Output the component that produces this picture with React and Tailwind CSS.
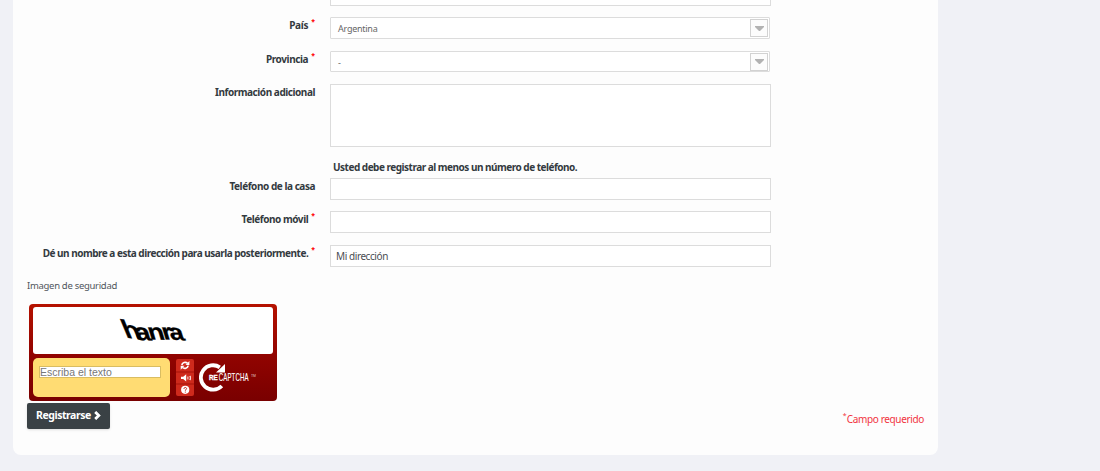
import React, { useState } from 'react';

const inputClass =
    'block w-[441px] border border-[#dcdcdc] bg-white px-[5px] text-[10px] tracking-[-0.42px] text-[#4a4d52] outline-none';

const Row = ({ label, required, className, labelClass, children }) => (
    <div className={`flex items-start ${className}`}>
        <label className="mr-[15px] flex w-[302px] justify-end whitespace-nowrap text-[10px] font-bold leading-[17px] text-[#333a40]">
            <span className={labelClass}>{label}</span>
            {required && <sup className="ml-[3px] top-0 text-[7px] leading-[9px] text-[#ff0000]">*</sup>}
        </label>
        {children}
    </div>
);

const Select = ({ value, className }) => (
    <div className={`flex w-[440px] items-center justify-between rounded-[1px] border border-[#dcdcdc] bg-white pl-[7px] ${className}`}>
        <span className="mt-px text-[9px] leading-none tracking-[-0.25px] text-[#666]">{value}</span>
        <div className="mr-px flex h-[18px] w-[18px] items-center justify-center border border-[#d2d2d2] bg-[#fcfcfc]">
            <svg width="9" height="5" viewBox="0 0 9 5">
                <path d="M0 0h9v1L5 5H4L0 1z" fill="#b2b2b2" />
            </svg>
        </div>
    </div>
);

const Captcha = () => (
    <div className="ml-[16px] mt-[10px] h-[97px] w-[248px] rounded-[4px] bg-gradient-to-b from-[#b51200] via-[#930400] to-[#790000] px-[4px] pt-[3px]">
        <div className="h-[47px] w-[240px] rounded-[3px] bg-white">
            <svg width="240" height="47" fontFamily="'Liberation Sans', sans-serif" fontWeight="bold">
                <g stroke="#000" strokeWidth=".3">
                    <text transform="matrix(1.1 .17 .42 1 93 30.5)" fontSize="26">h</text>
                    <text transform="matrix(1.15 .04 .3 1 104 33)" fontSize="24">a</text>
                    <text transform="matrix(1.15 .02 .3 1 117 32.5)" fontSize="23">n</text>
                    <text transform="matrix(1.15 .02 .3 1 131 32.5)" fontSize="23">r</text>
                    <text transform="matrix(1.15 .08 .3 1 138 32.5)" fontSize="23">a</text>
                </g>
            </svg>
        </div>
        <div className="mt-[4px] flex">
            <div className="h-[39px] w-[137px] rounded-[5px] bg-[#ffdc73] pl-[6px] pt-[8px]">
                <input
                    type="text"
                    placeholder="Escriba el texto"
                    className="block h-[12px] w-[122px] border border-[#d9bd62] bg-white p-0 font-['Liberation_Sans',sans-serif] text-[10.5px] leading-[10px] text-[#444] outline-none placeholder:text-[#777]"
                />
            </div>
            <div className="ml-[6px] mt-px flex h-[37px] w-[18px] flex-col overflow-hidden rounded-[2px] bg-[#ce2a1c]">
                <svg width="18" height="37" viewBox="0 0 18 37" fill="none" stroke="#fff">
                    <path d="M0 13h18M0 25h18" stroke="#a51208" />
                    <path d="M5.8 6C6.2 3.5 9.5 2.5 11.5 4.2M12.2 6.7C11.7 9.3 8.4 10.2 6.5 8.5" strokeWidth="1.6" />
                    <path d="M13.4 2v4H9.6zM4.7 10.7v-4h3.8z" fill="#fff" stroke="none" />
                    <path d="M5 17.7h2.2l3-2.5v7.4l-3-2.5H5z" fill="#fff" stroke="none" />
                    <path d="M11.9 17.5v3M13.4 17.8l1-.6v3.6l-1-.6" strokeWidth=".9" />
                    <circle cx="9.2" cy="30.8" r="4.1" fill="#fff" stroke="none" />
                    <path d="M7.9 29.8c.1-1.8 2.8-1.7 2.6-.1-.1.9-1.2.9-1.2 2M9.3 32.6v1" stroke="#c02217" />
                </svg>
            </div>
            <svg className="ml-[5px]" width="64" height="38" viewBox="0 0 64 38" fill="#fff" fontFamily="'Liberation Sans', sans-serif">
                <path d="M20.8 9.3A12.2 12.2 0 1 0 22.8 28" fill="none" stroke="#fff" strokeWidth="3.8" />
                <path d="M26 6v8.5h-9z" />
                <text transform="translate(10 22) scale(.98 1)" fontSize="6.4" fontWeight="bold" stroke="#fff" strokeWidth=".3">RE</text>
                <text transform="translate(19.7 23) scale(.58 1)" fontSize="10.5" stroke="#fff" strokeWidth=".15" letterSpacing=".2">CAPTCHA</text>
                <text transform="translate(52 19.2)" fontSize="3.4" opacity=".75">TM</text>
            </svg>
        </div>
    </div>
);

const App = () => {
    const [alias, setAlias] = useState('Mi dirección');

    return (
        <div className="h-[471px] overflow-hidden bg-[#f0f1f6] font-['Noto_Sans','Open_Sans',sans-serif]">
            <form className="ml-[13px] h-[455px] w-[925px] overflow-hidden rounded-b-[8px] bg-[#fdfdfd]" onSubmit={e => e.preventDefault()}>
                <div className="ml-[317px] h-[6px] w-[441px] border border-t-0 border-[#dcdcdc] bg-white" />
                <Row label="País" required className="mt-[11px]" labelClass="tracking-[-0.3px]">
                    <Select value="Argentina" className="h-[22px]" />
                </Row>
                <Row label="Provincia" required className="mt-[12px]" labelClass="tracking-[-0.4px]">
                    <Select value="-" className="h-[21px]" />
                </Row>
                <Row label="Información adicional" className="mt-[12px]" labelClass="tracking-[-0.45px]">
                    <textarea className={`${inputClass} h-[63px] resize-none`} />
                </Row>
                <p className="ml-[320px] mt-[12px] text-[10px] font-bold leading-[16px] tracking-[-0.5px] text-[#333a40]">
                    Usted debe registrar al menos un número de teléfono.
                </p>
                <Row label="Teléfono de la casa" className="mt-[3px]" labelClass="tracking-[-0.45px]">
                    <input type="text" className={`${inputClass} h-[22px]`} />
                </Row>
                <Row label="Teléfono móvil" required className="mt-[11px]" labelClass="tracking-[-0.45px]">
                    <input type="text" className={`${inputClass} h-[22px]`} />
                </Row>
                <Row label="Dé un nombre a esta dirección para usarla posteriormente." required className="mt-[12px]" labelClass="tracking-[-0.5px]">
                    <input
                        type="text"
                        value={alias}
                        onChange={e => setAlias(e.target.value)}
                        className={`${inputClass} h-[22px]`}
                    />
                </Row>
                <p className="ml-[14px] mt-[11px] text-[9.5px] leading-[16px] tracking-[-0.3px] text-[#50565c]">Imagen de seguridad</p>
                <Captcha />
                <div className="mt-[2px] flex items-start justify-between pl-[14px] pr-[14px]">
                    <button
                        type="submit"
                        className="flex h-[26px] w-[83px] items-center rounded-[2px] bg-[#3a4145] pl-[9px] text-[10.5px] font-bold tracking-[-0.45px] text-white shadow-sm"
                    >
                        Registrarse
                        <svg className="mb-px ml-[3px]" width="7" height="9" viewBox="0 0 7 9" fill="none" stroke="#fff" strokeWidth="2.8">
                            <path d="M1.2 .9 4.8 4.5 1.2 8.1" />
                        </svg>
                    </button>
                    <p className="mt-[8px] flex text-[10px] leading-[16px] tracking-[-0.35px] text-[#f13340]">
                        <sup className="top-0 text-[7px] leading-[9px] tracking-normal">*</sup>
                        Campo requerido
                    </p>
                </div>
            </form>
        </div>
    );
};

export default App;
